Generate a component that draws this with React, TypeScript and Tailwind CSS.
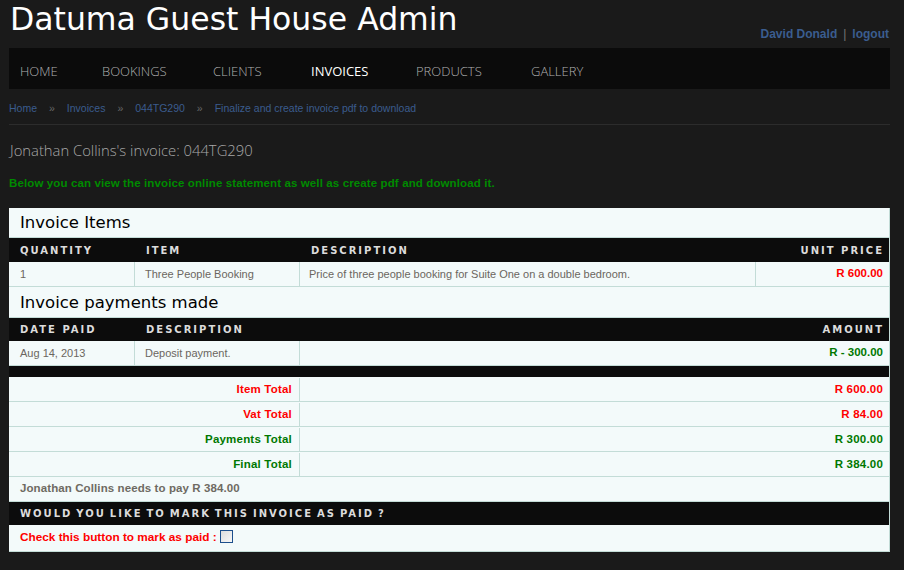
import React from "react";

const sans = "font-['Liberation_Sans',Arial,sans-serif]";
const thFont = "font-['DejaVu_Sans',Verdana,sans-serif]";

function HeadCell({ children, right }: { children?: React.ReactNode; right?: boolean }) {
  return (
    <div
      className={`flex items-center px-[11px] text-[10px] font-bold tracking-[2px] text-[#dcdcdc] ${thFont} ${
        right ? "justify-end pr-[5px]" : ""
      }`}
    >
      {children}
    </div>
  );
}

export default function App() {
  const nav = [
    { label: "HOME", w: "w-[82px]" },
    { label: "BOOKINGS", w: "w-[111px]" },
    { label: "CLIENTS", w: "w-[98px]" },
    { label: "INVOICES", w: "w-[105px]", active: true },
    { label: "PRODUCTS", w: "w-[115px]" },
    { label: "GALLERY", w: "w-[100px]" },
  ];
  return (
    <div className={`min-h-[570px] w-[904px] bg-[#1a1a1a] ${sans}`}>
      <div className="ml-[9px] w-[881px]">
        {/* header */}
        <div className="flex h-[48px] items-start justify-between">
          <h1 className="ml-[1px] mt-[-3px] font-['DejaVu_Sans',Verdana,sans-serif] text-[31.5px] leading-[44px] text-white">
            Datuma Guest House Admin
          </h1>
          <div className="mr-[1px] mt-[25px] flex items-center gap-[6px] text-[12px] font-bold text-[#3b5d8f]">
            <span>David Donald</span>
            <span className="font-normal text-[#777]">|</span>
            <span>logout</span>
          </div>
        </div>
        {/* nav */}
        <div className="flex h-[41px] items-center bg-[#0b0b0b] pl-[11px] pt-[6px] font-['Open_Sans',sans-serif] text-[13px] font-light">
          {nav.map((n) => (
            <div key={n.label} className={`${n.w} ${n.active ? "text-white font-normal" : "text-[#b0b0b0]"}`}>
              {n.label}
            </div>
          ))}
        </div>
        {/* breadcrumb */}
        <div className="flex h-[35px] items-center pt-[4px] text-[10.5px] text-[#3a5c8e]">
          <span>Home</span>
          <span className="px-[12px] text-[#666]">»</span>
          <span>Invoices</span>
          <span className="px-[12px] text-[#666]">»</span>
          <span>044TG290</span>
          <span className="px-[12px] text-[#666]">»</span>
          <span>Finalize and create invoice pdf to download</span>
        </div>
        <div className="h-px bg-[#2c2c2c]" />
        <div className="flex h-[50px] items-center pl-[1px] font-['Open_Sans',sans-serif] text-[14.8px] font-light text-[#a8a8a8]">
          Jonathan Collins's invoice: 044TG290
        </div>
        <div className="flex h-[18px] items-center text-[11.5px] font-bold tracking-[0.12px] text-[#008a00]">
          Below you can view the invoice online statement as well as create pdf and download it.
        </div>
        <div className="h-[15px]" />
        {/* panel */}
        <div className="border-r border-[#c3dcd7] bg-[#f3fafa] text-[11px]">
          <div className="flex h-[30px] items-center border-b border-[#c3dcd7] pl-[11px] pt-[2px] font-['DejaVu_Sans',Verdana,sans-serif] text-[16.5px] text-black">
            Invoice Items
          </div>
          <div className="grid h-[24px] grid-cols-[126px_165px_465px_1fr] bg-[#0c0c0c]">
            <HeadCell>QUANTITY</HeadCell>
            <HeadCell>ITEM</HeadCell>
            <HeadCell>DESCRIPTION</HeadCell>
            <HeadCell right>UNIT PRICE</HeadCell>
          </div>
          <div className="grid h-[25px] grid-cols-[126px_165px_456px_1fr] border-b border-[#c3dcd7] text-[#6b6660]">
            <div className="flex items-center border-r border-[#c3dcd7] pl-[11px]">1</div>
            <div className="flex items-center border-r border-[#c3dcd7] pl-[10px]">Three People Booking</div>
            <div className="flex items-center border-r border-[#c3dcd7] pl-[9px]">
              Price of three people booking for Suite One on a double bedroom.
            </div>
            <div className="flex items-center justify-end pr-[6px] text-[11.5px] font-bold text-[#ff0000]">R 600.00</div>
          </div>
          <div className="flex h-[31px] items-center border-b border-[#c3dcd7] pl-[11px] pt-[2px] font-['DejaVu_Sans',Verdana,sans-serif] text-[16.5px] text-black">
            Invoice payments made
          </div>
          <div className="grid h-[23px] grid-cols-[126px_165px_1fr] bg-[#0c0c0c]">
            <HeadCell>DATE PAID</HeadCell>
            <HeadCell>DESCRIPTION</HeadCell>
            <HeadCell right>AMOUNT</HeadCell>
          </div>
          <div className="grid h-[25px] grid-cols-[126px_165px_1fr] border-b border-[#c3dcd7] text-[#6b6660]">
            <div className="flex items-center border-r border-[#c3dcd7] pl-[11px]">Aug 14, 2013</div>
            <div className="flex items-center border-r border-[#c3dcd7] pl-[10px]">Deposit payment.</div>
            <div className="flex items-center justify-end pr-[6px] text-[11.5px] font-bold text-[#007800]">R - 300.00</div>
          </div>
          <div className="h-[11px] bg-[#0c0c0c]" />
          {[
            { l: "Item Total", v: "R 600.00", c: "text-[#ff0000]" },
            { l: "Vat Total", v: "R 84.00", c: "text-[#ff0000]" },
            { l: "Payments Total", v: "R 300.00", c: "text-[#007800]" },
            { l: "Final Total", v: "R 384.00", c: "text-[#007800]" },
          ].map((r) => (
            <div key={r.l} className={`grid h-[25px] grid-cols-[291px_1fr] border-b border-[#c3dcd7] pt-[1px] text-[11.5px] font-bold tracking-[0.2px] ${r.c}`}>
              <div className="flex items-center justify-end border-r border-[#c3dcd7] pr-[7px]">{r.l}</div>
              <div className="flex items-center justify-end pr-[6px]">{r.v}</div>
            </div>
          ))}
          <div className="flex h-[25px] items-center border-b border-[#c3dcd7] pl-[11px] text-[11.5px] font-bold tracking-[0.1px] text-[#6e6a62]">
            Jonathan Collins needs to pay R 384.00
          </div>
          <div className="grid h-[23px] grid-cols-[1fr] bg-[#0c0c0c] [word-spacing:-1.5px]">
            <HeadCell>WOULD YOU LIKE TO MARK THIS INVOICE AS PAID ?</HeadCell>
          </div>
          <div className="flex h-[27px] items-center border-b border-[#c3dcd7] pl-[11px] text-[11.8px] font-bold text-[#ff0000]">
            <span>Check this button to mark as paid :</span>
            <span className="ml-[3px] mb-[3px] inline-block h-[13px] w-[13px] border border-[#1d4f8c] bg-gradient-to-br from-[#dcdcdc] to-[#f8f8f8]" />
          </div>
        </div>
      </div>
    </div>
  );
}
